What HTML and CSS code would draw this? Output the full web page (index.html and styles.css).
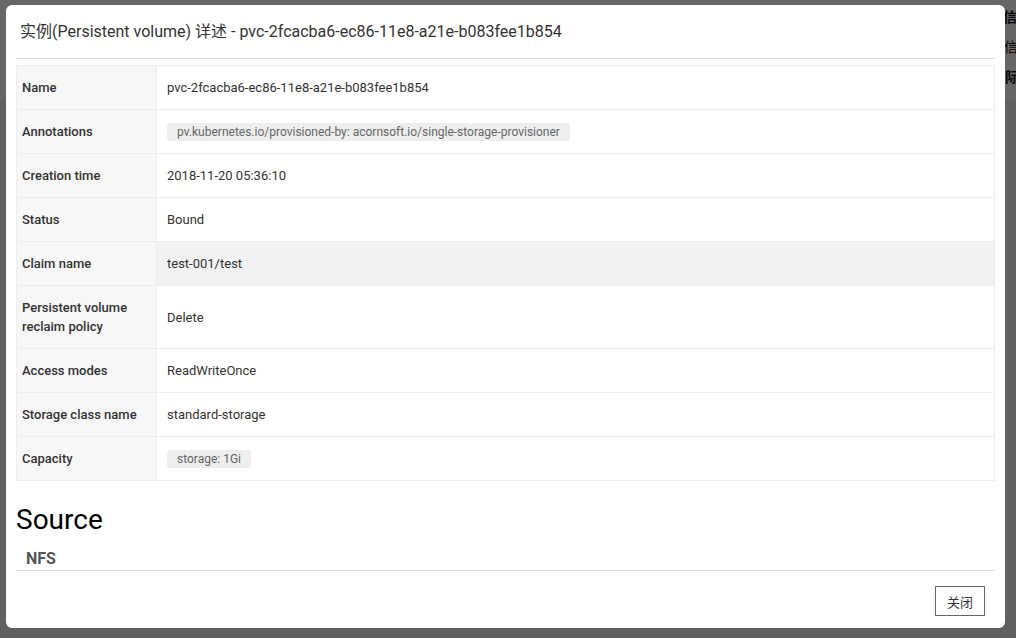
FILE: index.html
```html
<!DOCTYPE html>
<html lang="zh">
<head>
<meta charset="utf-8">
<title>Persistent volume</title>
<link rel="stylesheet" href="styles.css">
</head>
<body>
<div class="page">
  <div class="page-top"></div>
  <div class="page-rest"></div>
  <span class="bg-text t1">信息</span>
  <span class="bg-text t2">信息</span>
  <span class="bg-text t3">际</span>
</div>
<div class="overlay"></div>
<div class="modal">
  <div class="modal-header">
    <div class="modal-title">实例(Persistent volume) 详述 - pvc-2fcacba6-ec86-11e8-a21e-b083fee1b854</div>
  </div>
  <div class="modal-body">
    <table class="detail">
      <tbody>
        <tr><th>Name</th><td>pvc-2fcacba6-ec86-11e8-a21e-b083fee1b854</td></tr>
        <tr><th>Annotations</th><td><span class="badge">pv.kubernetes.io/provisioned-by: acornsoft.io/single-storage-provisioner</span></td></tr>
        <tr><th>Creation time</th><td>2018-11-20 05:36:10</td></tr>
        <tr><th>Status</th><td>Bound</td></tr>
        <tr class="hover"><th>Claim name</th><td>test-001/test</td></tr>
        <tr><th>Persistent volume reclaim policy</th><td>Delete</td></tr>
        <tr><th>Access modes</th><td>ReadWriteOnce</td></tr>
        <tr><th>Storage class name</th><td>standard-storage</td></tr>
        <tr><th>Capacity</th><td><span class="badge">storage: 1Gi</span></td></tr>
      </tbody>
    </table>
    <h3 class="section-title">Source</h3>
    <h4 class="sub-title">NFS</h4>
  </div>
  <div class="modal-footer">
    <button class="btn">关闭</button>
  </div>
</div>
</body>
</html>
```

FILE: styles.css
```css
html, body {
  margin: 0;
  padding: 0;
  width: 1016px;
  height: 638px;
  overflow: hidden;
  font-family: Roboto, "Noto Sans CJK SC", sans-serif;
}
.page {
  position: absolute;
  inset: 0;
  background: #f3f3f3;
}
.page-top {
  height: 100px;
  background: #ffffff;
}
.bg-text {
  position: absolute;
  white-space: nowrap;
  font-size: 14px;
  color: #111;
  font-family: "Noto Sans CJK SC", sans-serif;
  line-height: 20px;
}
.t1 { top: 6px; left: 1003px; font-weight: 700; }
.t2 { top: 36px; left: 1004px; }
.t3 { top: 66px; left: 1005px; font-weight: 700; }
.overlay {
  position: absolute;
  inset: 0;
  background: rgba(0, 0, 0, 0.6);
}
.modal {
  position: absolute;
  left: 6px;
  top: 5px;
  width: 979px;
  height: 623px;
  padding: 0 10px;
  background: #fff;
  border-radius: 6px;
  display: flex;
  flex-direction: column;
}
.modal-header {
  padding: 16px 4px;
  border-bottom: 1px solid #ddd;
}
.modal-title {
  font-size: 16px;
  line-height: 21px;
  color: #333;
}
.modal-body {
  height: 512px;
  overflow: hidden;
  padding-top: 6px;
  box-sizing: border-box;
}
.detail {
  width: 100%;
  border-collapse: collapse;
  font-size: 13px;
  line-height: 19px;
  color: #333;
}
.detail th, .detail td {
  border: 1px solid #eee;
  padding: 12px 10px;
  text-align: left;
  vertical-align: middle;
}
.detail th {
  width: 128px;
  padding: 12px 6px 12px 5px;
  background: #f7f7f7;
  font-weight: 500;
  color: #333;
}
.detail tr.hover td {
  background: #f2f2f2;
}
.badge {
  display: inline-block;
  background: #eee;
  color: #666;
  font-size: 12px;
  line-height: 18px;
  padding: 0 10px;
  border-radius: 2px;
}
.section-title {
  margin: 22px 0 0;
  font-size: 28px;
  font-weight: 400;
  line-height: 34px;
  color: #000;
}
.sub-title {
  margin: 12px 0 0;
  padding-left: 10px;
  font-size: 16px;
  font-weight: 700;
  line-height: 20px;
  color: #555;
}
.modal-footer {
  border-top: 1px solid #ddd;
  padding: 15px 10px 12px;
  display: flex;
  justify-content: flex-end;
}
.btn {
  height: 30px;
  padding: 0 11px;
  background: #fff;
  border: 1px solid #666;
  border-radius: 0;
  font-family: Roboto, "Noto Sans CJK SC", sans-serif;
  font-size: 13px;
  color: #333;
}
```
